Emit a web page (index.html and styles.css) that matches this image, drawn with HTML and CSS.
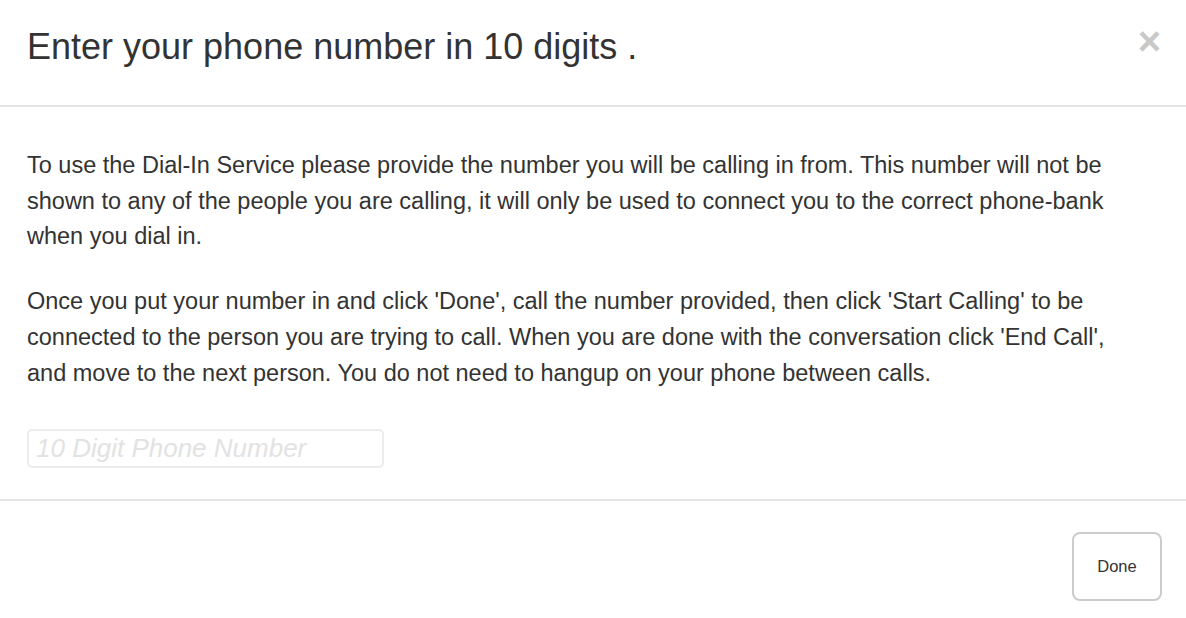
FILE: index.html
```html
<!DOCTYPE html>
<html lang="en">
<head>
<meta charset="utf-8">
<title>Dial-In</title>
<link rel="stylesheet" href="styles.css">
</head>
<body>
<div class="modal">
  <div class="modal-header">
    <h3 class="modal-title">Enter your phone number in 10 digits .</h3>
    <button class="close" type="button" aria-label="Close">&times;</button>
  </div>
  <div class="modal-body">
    <p>To use the Dial-In Service please provide the number you will be calling in from. This number will not be shown to any of the people you are calling, it will only be used to connect you to the correct phone-bank when you dial in.</p>
    <p class="last">Once you put your number in and click 'Done', call the number provided, then click 'Start Calling' to be connected to the person you are trying to call. When you are done with the conversation click 'End Call', and move to the next person. You do not need to hangup on your phone between calls.</p>
    <input class="phone-input" type="text" placeholder="10 Digit Phone Number">
  </div>
  <div class="modal-footer">
    <button class="btn" type="button">Done</button>
  </div>
</div>
</body>
</html>
```
FILE: styles.css
```css
html, body {
  margin: 0;
  padding: 0;
  background: #fff;
}
body {
  font-family: "Liberation Sans", Arial, Helvetica, sans-serif;
  color: #333;
}
.modal {
  width: 1186px;
}
.modal-header {
  display: flex;
  justify-content: space-between;
  align-items: flex-start;
  padding: 24px 25px 0 27px;
  height: 81px;
  border-bottom: 2px solid #e5e5e5;
}
.modal-title {
  margin: 0;
  font-size: 36px;
  font-weight: normal;
  line-height: 46px;
  color: #333;
}
.close {
  border: 0;
  background: none;
  padding: 0;
  margin-top: -3px;
  font-size: 40px;
  font-weight: bold;
  line-height: 40px;
  color: #c8c8c8;
  cursor: pointer;
  font-family: "Liberation Sans", Arial, sans-serif;
}
.modal-body {
  padding: 41px 45px 31px 27px;
}
.modal-body p {
  margin: 0 0 29px 0;
  font-size: 23.5px;
  line-height: 35.7px;
}
.modal-body p.last {
  margin-bottom: 38px;
}
.phone-input {
  display: block;
  box-sizing: border-box;
  width: 357px;
  height: 39px;
  margin: 0;
  padding: 0 7px;
  border: 2px solid #ececec;
  border-radius: 5px;
  font-family: "Liberation Sans", Arial, sans-serif;
  font-size: 26px;
  color: #333;
  outline: none;
}
.phone-input::placeholder {
  color: #e2e2e2;
  font-style: italic;
}
.modal-footer {
  display: flex;
  justify-content: flex-end;
  border-top: 2px solid #e5e5e5;
  padding: 31px 24px 20px;
}
.btn {
  box-sizing: border-box;
  width: 90px;
  height: 69px;
  background: #fff;
  border: 2px solid #ccc;
  border-radius: 8px;
  font-family: "Liberation Sans", Arial, sans-serif;
  font-size: 16.5px;
  color: #333;
  cursor: pointer;
}
```
